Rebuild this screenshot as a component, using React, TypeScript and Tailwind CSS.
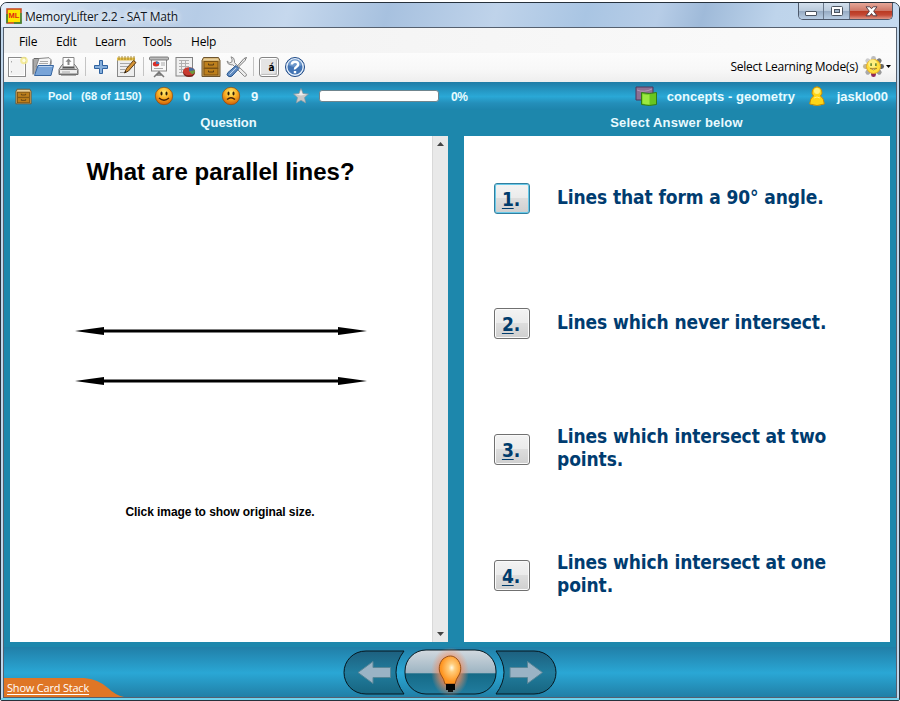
import React from 'react';

const segoe = "font-['Open_Sans','Noto_Sans',sans-serif]";
const arial = "font-['Liberation_Sans',Arial,sans-serif]";
const tahoma = "font-['DejaVu_Sans_Condensed','DejaVu_Sans',sans-serif]";

type IconProps = { className?: string };

function Drawer({ className = '' }: IconProps) {
  return (
    <svg viewBox="0 0 20 22" preserveAspectRatio="none" className={className}>
      <path d="M2.500 1.500h15l1.500 3v16H1v-16z" fill="#cfa35a" stroke="#6d5530" />
      <path d="M3 2.500h14l1 2H2z" fill="#e6cf9c" />
      <rect x="3" y="5.500" width="14" height="6.500" fill="#bd7f1c" stroke="#7b5112" />
      <rect x="3" y="12.500" width="14" height="6.500" fill="#bd7f1c" stroke="#7b5112" />
      <path d="M7.500 7.500v1.500h5V7.500M7.500 14.500v1.500h5v-1.500" fill="none" stroke="#573b14" />
    </svg>
  );
}

function Face({ sad = false, className = '' }: IconProps & { sad?: boolean }) {
  const id = sad ? 'faceSad' : 'faceHappy';
  return (
    <svg viewBox="0 0 20 20" className={className}>
      <defs>
        <radialGradient id={id} cx=".5" cy=".3" r=".7">
          <stop offset="0" stopColor="#ffec70" />
          <stop offset=".5" stopColor="#faae22" />
          <stop offset="1" stopColor="#d0600a" />
        </radialGradient>
      </defs>
      <circle cx="10" cy="10" r="8.700" fill={`url(#${id})`} stroke="#8a4a10" strokeWidth=".7" />
      <ellipse cx="7.500" cy="7.500" rx="1" ry="2" fill="#2b1b08" />
      <ellipse cx="12.500" cy="7.500" rx="1" ry="2" fill="#2b1b08" />
      <path d={sad ? 'M6 13.500q4-3.500 8 0' : 'M5 12q5 4.500 10 0'} fill="none" stroke="#4a2408" strokeWidth="1.400" />
    </svg>
  );
}

function Separator() {
  return <div className="h-[19px] w-px shrink-0 bg-[#c4c4c4]" />;
}

function Toolbar() {
  return (
    <div className="flex h-full items-center pb-[2px]">
      <svg viewBox="0 0 20 22" className="ml-[4px] h-[22px] w-5">
        <rect x="0.500" y="1.500" width="17" height="19" fill="#f3f3f3" stroke="#8b8b8b" />
        <rect x="1.500" y="2.500" width="15" height="17" fill="none" stroke="#fff" />
        <path d="M3.500 5v1.500M3.500 15v1.500" stroke="#aaa" />
        <circle cx="16" cy="4.500" r="3.800" fill="#f3e98c" opacity=".85" />
        <circle cx="16" cy="4.500" r="1.700" fill="#fffde0" />
      </svg>
      <svg viewBox="0 0 22 20" className="ml-[4px] h-5 w-[22px]">
        <path d="M1 17.500V2.500l1-1h6l1.500 2H19v4" fill="#a9a9a9" stroke="#686868" />
        <path d="M4 10L7 1.500 17 .7l2 2-1 6z" fill="#f6f6f6" stroke="#858585" />
        <path d="M8 4.500h8M7 6.500h9" stroke="#aaa" />
        <path d="M6 8.500h15.500L19 18.500H2.500z" fill="#78a4d8" stroke="#3766a1" />
        <path d="M6.800 9.500h13.500" stroke="#b8d1ee" />
      </svg>
      <svg viewBox="0 0 21 21" className="ml-[4px] h-[21px] w-[21px]">
        <path d="M3.500 9.500L5 8h11l1.500 1.500 2.500 4v5H1v-5z" fill="#dcdcdc" stroke="#6c6c6c" />
        <path d="M5 11V1.500h11V11z" fill="#fff" stroke="#888" />
        <path d="M10.500 2.500l3 3.300h-2V9h-2V5.800h-2z" fill="#888" />
        <path d="M4 12.500l1-1.700h11l1 1.700z" fill="#555" />
        <rect x="1.500" y="13.500" width="18" height="4.500" rx="1" fill="#ededed" stroke="#777" />
        <path d="M4 16h8" stroke="#aaa" />
        <path d="M3 19.500h15" stroke="#aaa" />
      </svg>
      <div className="ml-[6px] flex items-center"><Separator /></div>
      <svg viewBox="0 0 16 16" className="ml-[7px] h-4 w-4">
        <path d="M6.500 1.500h3v5h5v3h-5v5h-3v-5h-5v-3h5z" fill="#85aedb" stroke="#2f62a0" />
      </svg>
      <svg viewBox="0 0 21 22" className="ml-[7px] h-[22px] w-[21px]">
        <rect x="1.500" y="3" width="17" height="17.500" fill="#eee" stroke="#888" />
        <path d="M1 1.500h18v3H1z" fill="#e6c24a" />
        <path d="M3 0v4M6 0v4M9 0v4M12 0v4M15 0v4M18 0v4" stroke="#94751f" strokeWidth=".8" />
        <path d="M4 7.500h10M4 10.500h8M4 13.500h5M4 16.500h4" stroke="#a7a7a7" />
        <path d="M8.500 17l2-4.500 7-8 2.500 2-7.500 8.500z" fill="#d59436" stroke="#5a3c15" />
        <path d="M8.500 17l.7-2 1.300 1z" fill="#111" />
      </svg>
      <div className="ml-[6px] flex items-center"><Separator /></div>
      <svg viewBox="0 0 21 22" className="ml-[5px] h-[22px] w-[21px]">
        <path d="M10 15v3M10 16l-5 5M10 16l5 5M6.500 19h7" fill="none" stroke="#777" strokeWidth="1.500" />
        <rect x="2.500" y="3.500" width="15" height="11.500" fill="#f9f9f9" stroke="#888" />
        <rect x=".5" y="1" width="19" height="3" rx="1" fill="#bbb" stroke="#666" strokeWidth=".8" />
        <ellipse cx="7" cy="8" rx="3.200" ry="2.500" fill="#d7302a" />
        <path d="M7 8V5.300q3.500.2 3.500 2.500z" fill="#4579b7" />
        <path d="M12 7h4M12 9h4M5 12.500h9" stroke="#aaa" />
      </svg>
      <svg viewBox="0 0 21 22" className="ml-[5px] h-[22px] w-[21px]">
        <rect x="1" y="1.500" width="16.500" height="18.500" fill="#f0f0f0" stroke="#838383" />
        <path d="M4 4.500h10M4 7.500h10M4 10.500h10M4 13.500h5M4 16.500h4M6.500 4v13M10.500 4v9" stroke="#b0b0b0" />
        <ellipse cx="14" cy="16.500" rx="6" ry="4.500" fill="#762018" />
        <ellipse cx="14" cy="15.300" rx="6" ry="4" fill="#c93a30" />
        <path d="M14 15.300V11.500q5 0 6 3z" fill="#466b9e" />
        <path d="M14 15.300l6-1q.5 3-3 4z" fill="#6d983e" />
      </svg>
      <Drawer className="ml-[5px] h-[22px] w-5" />
      <svg viewBox="0 0 22 22" className="ml-[5px] h-[22px] w-[22px]">
        <path d="M5 .8Q8.500 1.500 8.500 5v1.700l12 11.500q.3 2.300-2 2.300L6.800 8.800H5Q1.500 8.800 1 5l2.700 2L6 5.800V3.300z" fill="#ececec" stroke="#8a8a8a" />
        <path d="M20.500 1.500l-2.500 1-7 8 1 1 7-7z" fill="#eee" stroke="#777" />
        <path d="M10 9.500l3 3-7 7.500q-2 1.500-4 0t0-3.500z" fill="#638dc1" stroke="#24548e" />
        <path d="M10 12l-6.500 6.500" stroke="#bdd5ef" />
      </svg>
      <div className="ml-[5px] flex items-center"><Separator /></div>
      <div className={`ml-[5px] flex h-[20px] w-[20px] items-center justify-center rounded-[3px] border border-[#858585] bg-[#e4e4e4] ${tahoma} pl-[5px] pt-[2px] text-[10px] font-bold leading-none shadow-[inset_0_0_0_1px_#fff,inset_-2px_-2px_1px_#bbb]`}>á</div>
      <svg viewBox="0 0 22 22" className="ml-[5px] h-[22px] w-[22px]">
        <circle cx="11" cy="11" r="9.500" fill="#4375b5" stroke="#254e88" />
        <circle cx="11" cy="11" r="8.200" fill="none" stroke="#e8f0fa" strokeWidth="1.400" />
        <path d="M4 9a7 6 0 0 1 14 0q-6 4-14 0" fill="#7fa5d3" opacity=".7" />
        <path d="M7.800 8.500q.2-2.700 3.200-2.700t3.200 2.500q0 1.500-1.800 2.600T11 13.300M11 15v2.200" fill="none" stroke="#fff" strokeWidth="2.400" />
      </svg>
      <span className={`ml-auto ${segoe} whitespace-nowrap pt-px text-[12px] tracking-[-0.240px]`}>Select Learning Mode(s)</span>
      <svg viewBox="0 0 24 24" className="ml-[4px] h-[23px] w-[23px]">
        <g strokeWidth="5" strokeLinecap="round">
          <path d="M12 12V3.500" stroke="#bcbcbc" />
          <path d="M12 12l6-6" stroke="#777" />
          <path d="M12 12h8.500" stroke="#666" />
          <path d="M12 12l6 6" stroke="#999" />
          <path d="M12 12v8.500" stroke="#8e285b" />
          <path d="M12 12l-6 6" stroke="#aaa" />
          <path d="M12 12H3.500" stroke="#c3b693" />
          <path d="M12 12L6 6" stroke="#ccc" />
        </g>
        <circle cx="12" cy="12" r="7.300" fill="#ffdd3c" stroke="#e5a91f" />
        <circle cx="11" cy="9" r="4.500" fill="#fff69b" opacity=".7" />
        <path d="M9.500 8.500v3M14.500 8.500v3" stroke="#567c28" strokeWidth="1.500" />
        <path d="M8.500 14q3.500 3 7 0z" fill="#fff" stroke="#9a7617" strokeWidth=".8" />
      </svg>
      <svg viewBox="0 0 5 3" className="ml-px mr-[5px] h-[3px] w-[5px]"><path d="M0 0h5L2.500 3z" /></svg>
    </div>
  );
}

function TitleBar() {
  return (
    <div className="flex h-[24px] shrink-0 bg-[linear-gradient(105deg,#e5eef8_0%,#c7d8ec_10%,#b6cce6_22%,#c6d8ed_32%,#a7c1df_43%,#bfd3ea_55%,#a9c5e3_65%,#b7cde7_73%,#9fbad9_78%,#bed4eb_86%,#c5daef_100%)] pl-[5px]">
      <svg viewBox="0 0 16 16" className="mt-[5px] h-4 w-4">
        <rect x="1" y="1" width="14" height="14" fill="#ffe500" stroke="#c3401f" strokeWidth="1.500" />
        <path d="M8 15h7V5M1 15V6" fill="none" stroke="#319036" strokeWidth="1.500" />
        <text x="8" y="10" textAnchor="middle" fontFamily="Liberation Sans" fontSize="7.500" fontWeight="700" fill="#df2811">ML</text>
      </svg>
      <span className={`ml-[3px] mt-[5px] whitespace-nowrap ${segoe} text-[12px] leading-[17px] tracking-[-0.230px] text-[#10161d] [text-shadow:0_0_6px_white,0_0_6px_white]`}>MemoryLifter 2.2 - SAT Math</span>
      <div className="ml-auto mr-[6px] flex h-[17px] w-[95px] overflow-hidden rounded-b-[5px] border border-t-0 border-[#4d596b]">
        <div className="flex w-[25px] justify-center border-r border-[#69788b] bg-[linear-gradient(#d2dfed_0%,#bacbdc_48%,#95aac2_50%,#b8cde3_100%)]">
          <div className="mt-[8px] h-[5px] w-[12px] rounded-[1px] border border-[#4b5460] bg-white" />
        </div>
        <div className="flex w-[26px] justify-center border-r border-[#69788b] bg-[linear-gradient(#d2dfed_0%,#bacbdc_48%,#95aac2_50%,#b8cde3_100%)]">
          <svg viewBox="0 0 12 10" className="mt-[3px] h-[10px] w-3"><rect x=".5" y=".5" width="11" height="9" rx="1" fill="#fff" stroke="#4b5460" /><rect x="3.500" y="3.500" width="5" height="3" fill="#9eb2c7" stroke="#4b5460" /></svg>
        </div>
        <div className="flex flex-1 justify-center bg-[linear-gradient(#e6a798_0%,#ce7868_47%,#b93921_50%,#c44935_75%,#df9686_100%)]">
          <svg viewBox="0 0 13 11" className="mt-[3px] h-[11px] w-[13px]"><path d="M1 .8h3.800l1.700 2 1.700-2H12L8.700 5.200 12 9.800H8.200L6.500 7.500 4.800 9.800H1l3.300-4.600z" fill="#fff" stroke="#574148" /></svg>
        </div>
      </div>
    </div>
  );
}

function StatusBar() {
  return (
    <div className={`flex h-[28px] shrink-0 items-center bg-[linear-gradient(#207ca6_0%,#279dca_38%,#2aa8d6_52%,#248fba_75%,#1d84ac_100%)] ${arial} text-[13px] font-bold text-[#e7fbff]`}>
      <Drawer className="ml-[11px] h-[17px] w-[17px]" />
      <span className="ml-[16px] w-[33px] whitespace-nowrap pt-px text-[11px]">Pool</span>
      <span className="w-[73px] whitespace-nowrap pt-px text-[11px] tracking-[0.070px]">(68 of 1150)</span>
      <Face className="h-5 w-5" />
      <span className="ml-[9px] w-[38px] pt-[2px] text-[13px]">0</span>
      <Face sad className="h-5 w-5" />
      <span className="ml-[10px] w-[42px] pt-[2px] text-[13px]">9</span>
      <svg viewBox="0 0 16 16" className="h-4 w-4"><path d="M8 .5l2.200 5 5.300.5-4 3.600 1.200 5.300L8 12.200 3.300 14.900l1.200-5.300L.5 6l5.300-.5z" fill="#c8c8c8" stroke="#8798a0" strokeWidth=".7" /><path d="M8 2l1.500 4 4 .5-5.500 1-5.500-1 4-.5z" fill="#ededed" /></svg>
      <div className="ml-[10px] h-[12px] w-[120px] rounded-[3px] border border-[#6f858e] bg-white" />
      <span className="ml-[12px] w-[20px] pt-[2px] text-[12px] tracking-[-0.300px]">0%</span>
      <svg viewBox="0 0 23 20" className="ml-auto h-5 w-[23px]">
        <path d="M1 1h17v13H1z" fill="#8e7193" stroke="#4f375a" />
        <path d="M2 4q7 3 15-1" stroke="#b796b8" fill="none" />
        <path d="M6.500 6.500q8 2 15 0v12q-7 2-15 0z" fill="#68c520" stroke="#327c16" />
        <path d="M7.500 8q4 1 7 .5v10q-4 0-7-1z" fill="#9be940" />
      </svg>
      <span className="ml-[9px] w-[142px] whitespace-nowrap pt-[2px] tracking-[0.060px]">concepts - geometry</span>
      <svg viewBox="0 0 16 20" className="h-5 w-4">
        <path d="M4.500 10Q2 7.500 3.500 4 5 .8 8 .8T12.500 4Q14 7.500 11.500 10q3.500 2 3.800 8Q8 21 .7 18 1 12 4.500 10z" fill="#ffd515" stroke="#c18a0c" />
        <ellipse cx="8" cy="5" rx="3" ry="3" fill="#fff17b" /><path d="M5 12q3-2 6 0" stroke="#fff17b" fill="none" />
      </svg>
      <span className="ml-[12px] mr-[8px] whitespace-nowrap pt-[2px]">jasklo00</span>
    </div>
  );
}

function Answer({ n, text, height, active = false }: { n: number; text: string; height: string; active?: boolean }) {
  return (
    <div className={`flex ${height} items-center pl-[30px]`}>
      <button className={`flex h-[31px] w-[36px] shrink-0 items-center justify-center rounded-[3px] border bg-[linear-gradient(#f3f3f3_0%,#ebebeb_48%,#dddddd_50%,#cfcfcf_100%)] ${active ? 'border-[#327f9f] shadow-[inset_0_0_0_1px_#68c9e9]' : 'border-[#707070] shadow-[inset_0_0_0_1px_#fafafa]'} ${tahoma} pr-[2px] pt-[2px] text-[19px] font-bold leading-none tracking-[-0.100px] text-[#003c6c]`}>
        <span className="underline decoration-1 underline-offset-2">{n}</span>.
      </button>
      <p className={`ml-[27px] w-[300px] ${tahoma} pb-[3px] text-[19px] font-bold leading-[23px] tracking-[-0.110px] text-[#003c70]`}>{text}</p>
    </div>
  );
}

function ParallelLines() {
  return (
    <svg viewBox="0 0 292 60" className="ml-[65px] mt-[139px] h-[60px] w-[292px]">
      {[5, 55].map((y) => (
        <g key={y}>
          <path d={`M20 ${y}H270`} stroke="#000" strokeWidth="3" />
          <path d={`M0 ${y}q14-2 29-4v8q-15-2-29-4M292 ${y}q-14-2-29-4v8q15-2 29-4`} fill="#000" />
        </g>
      ))}
    </svg>
  );
}

function Navigation() {
  return (
    <svg viewBox="0 0 214 48" className="h-12 w-[214px]">
      <defs>
        <linearGradient id="side" x2="0" y2="1"><stop stopColor="#1d607f" /><stop offset=".5" stopColor="#217d9e" /><stop offset="1" stopColor="#176580" /></linearGradient>
        <linearGradient id="gloss" x2="0" y2="1"><stop stopColor="#d2d9df" /><stop offset=".52" stopColor="#9db4c2" /><stop offset=".54" stopColor="#156a87" /><stop offset="1" stopColor="#217d9f" /></linearGradient>
        <radialGradient id="glow"><stop offset=".25" stopColor="#ff7b32" /><stop offset=".6" stopColor="#f78d5c" stopOpacity=".65" /><stop offset="1" stopColor="#ef916b" stopOpacity="0" /></radialGradient>
        <radialGradient id="bulb" cx=".58" cy=".42"><stop stopColor="#fffbe4" /><stop offset=".3" stopColor="#ffcd7d" /><stop offset="1" stopColor="#ff941f" /></radialGradient>
      </defs>
      <path d="M61 3H23C10 3 1 13 1 24.500S10 46 23 46h38Q45 24 61 3z" fill="url(#side)" stroke="#06171f" />
      <path d="M153 3h38c13 0 22 10 22 21.500S204 46 191 46h-38q16-22 0-43z" fill="url(#side)" stroke="#06171f" />
      <rect x="62" y="2" width="91" height="44" rx="21" fill="url(#gloss)" stroke="#06171f" />
      <ellipse cx="107" cy="24" rx="19" ry="25" fill="url(#glow)" />
      <path d="M102 36q-1-5-4-9c-3-5-2-12 2-16 5-4 10-4 14 0s5 11 2 16q-3 4-4 9z" fill="url(#bulb)" stroke="#98511b" />
      <path d="M103 36h9v6h-9z" fill="#050505" /><path d="M105 43h5" stroke="#111" strokeWidth="2" />
      <path d="M15 24.500l15-11v6h17.500v10H30v6z" fill="#9ab3c5" stroke="#578698" />
      <path d="M199.500 24.500l-15-11v6h-17.500v10h17.500v6z" fill="#9ab3c5" stroke="#578698" />
    </svg>
  );
}

export default function App() {
  return (
    <div className="h-[701px] w-[900px] overflow-hidden bg-white pt-[2px]">
      <div className="flex h-[699px] w-[900px] flex-col overflow-hidden rounded-t-[7px] rounded-b-[2px] border border-[#26313c] bg-[#c1d7ec]">
        <TitleBar />
        <div className="ml-[2px] mr-[2px] flex h-[671px] shrink-0 flex-col border border-[#55606f] bg-[#1d87ac]">
          <nav className={`flex h-[25px] shrink-0 items-center bg-[linear-gradient(90deg,#f0f0f0,#fbfbfb)] ${segoe} pt-[2px] text-[12px] tracking-[-0.200px] text-black`}>
            <span className="ml-[15px] w-[37px]">File</span><span className="w-[39px]">Edit</span><span className="w-[48px]">Learn</span><span className="w-[48px]">Tools</span><span>Help</span>
          </nav>
          <div className="h-[29px] shrink-0 bg-[linear-gradient(#fcfcfc,#f8f8f8_55%,#eeeeee)]"><Toolbar /></div>
          <StatusBar />
          <div className={`flex h-[26px] shrink-0 ${arial} text-[13px] font-bold leading-[25px] text-[#e9faff]`}>
            <div className="w-[448px] pl-[4px] text-center">Question</div>
            <div className="w-[450px] pl-[8px] text-center tracking-[0.200px]">Select Answer below</div>
          </div>
          <main className="flex h-[506px] shrink-0 gap-[16px] pl-[6px]">
            <section className="flex w-[438px] bg-white">
              <div className={`w-[422px] ${arial}`}>
                <h1 className="mt-[21px] whitespace-nowrap pr-px text-center text-[24px] font-bold leading-[30px]">What are parallel lines?</h1>
                <ParallelLines />
                <p className="mt-[116px] pr-[2px] text-center text-[12px] font-bold leading-[20px] tracking-[-0.070px]">Click image to show original size.</p>
              </div>
              <div className="flex w-4 flex-col items-center justify-between border-l border-[#d9d9d9] bg-[#e9e9e9] py-[6px]">
                <svg viewBox="0 0 7 4" className="h-1 w-[7px]"><path d="M0 4L3.500 0 7 4z" fill="#444" /></svg>
                <svg viewBox="0 0 7 4" className="h-1 w-[7px]"><path d="M0 0h7L3.500 4z" fill="#444" /></svg>
              </div>
            </section>
            <section className="w-[426px] bg-white">
              <Answer n={1} active height="h-[125px]" text="Lines that form a 90° angle." />
              <Answer n={2} height="h-[125px]" text="Lines which never intersect." />
              <Answer n={3} height="h-[127px]" text="Lines which intersect at two points." />
              <Answer n={4} height="h-[125px]" text="Lines which intersect at one point." />
            </section>
          </main>
          <footer className="mt-[5px] flex h-[50px] shrink-0 items-start bg-[linear-gradient(#217fa8_0%,#2aa7d5_52%,#217fa6_100%)]">
            <div className="grid h-[50px] w-[339px] items-end">
              <svg viewBox="0 0 120 19" className="col-start-1 row-start-1 h-[19px] w-[120px]"><path d="M0 0h80q14 1 24 10 7 7 16 9H0z" fill="#df7626" /></svg>
              <a className={`col-start-1 row-start-1 mb-[1px] ml-[3px] whitespace-nowrap ${segoe} text-[11px] leading-[16px] tracking-[-0.200px] text-white underline underline-offset-2`}>Show Card Stack</a>
            </div>
            <div className="mt-[1px]"><Navigation /></div>
          </footer>
        </div>
        <div className="h-[2px] shrink-0 bg-[#70d3ed]" />
      </div>
    </div>
  );
}
